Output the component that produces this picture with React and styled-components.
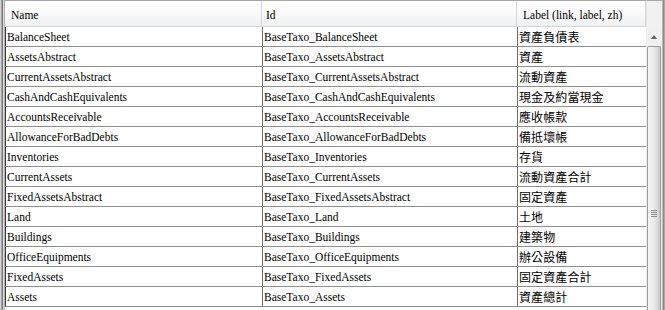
import styled, { createGlobalStyle } from "styled-components";

const Global = createGlobalStyle`
  html, body {
    margin: 0;
    padding: 0;
    background: #ffffff;
    overflow: hidden;
  }
`;

const rows = [
  ["BalanceSheet", "資產負債表"],
  ["AssetsAbstract", "資產"],
  ["CurrentAssetsAbstract", "流動資產"],
  ["CashAndCashEquivalents", "現金及約當現金"],
  ["AccountsReceivable", "應收帳款"],
  ["AllowanceForBadDebts", "備抵壞帳"],
  ["Inventories", "存貨"],
  ["CurrentAssets", "流動資產合計"],
  ["FixedAssetsAbstract", "固定資產"],
  ["Land", "土地"],
  ["Buildings", "建築物"],
  ["OfficeEquipments", "辦公設備"],
  ["FixedAssets", "固定資產合計"],
  ["Assets", "資產總計"],
];

const Frame = styled.div`
  display: flex;
  width: 665px;
  height: 310px;
  overflow: hidden;
  font-family: "Liberation Serif", "Noto Sans CJK TC", serif;
  font-size: 11.5px;
  color: #000;
`;

const EdgeLeft = styled.div`
  width: 5px;
  flex: none;
  background: linear-gradient(
    to right,
    #d4d4d4 0 1px,
    #a3a3a3 1px 2px,
    #7d7d7d 2px 3px,
    #d9d9d9 3px 4px,
    #b4b4b4 4px 5px
  );
`;

const EdgeRight = styled.div`
  width: 4px;
  flex: none;
  background: linear-gradient(
    to right,
    #b8b8b8 0 1px,
    #8a8a8a 1px 2px,
    #a8a8a8 2px 3px,
    #d0d0d0 3px 4px
  );
`;

const Table = styled.div`
  display: flex;
  flex-direction: column;
  width: 641px;
  flex: none;
`;

const Header = styled.div`
  display: grid;
  grid-template-columns: 257px 255px 129px;
  height: 25px;
  border-top: 1px solid #a7a7a7;
  border-bottom: 1px solid #d5d5d5;
  background: linear-gradient(to bottom, #ffffff 0%, #fafafb 45%, #eff0f2 100%);
`;

const HeadCell = styled.div`
  display: flex;
  align-items: center;
  padding-left: ${(p) => p.$pad}px;
  padding-top: 2px;
  border-right: 1px solid #d5d5d5;
  white-space: nowrap;
  overflow: hidden;
`;

const Row = styled.div`
  display: grid;
  grid-template-columns: 257px 255px 129px;
  height: 20px;
`;

const Cell = styled.div`
  display: flex;
  align-items: center;
  padding-left: ${(p) => p.$pad}px;
  padding-top: 1px;
  border-left: 1px solid ${(p) => (p.$first ? "#3a3a3a" : "#6e6e6e")};
  border-bottom: 1px solid #8f8f8f;
  white-space: nowrap;
  overflow: hidden;
`;

const Zh = styled.span`
  font-size: 12px;
  letter-spacing: 0.1px;
`;

const ScrollBar = styled.div`
  width: 16px;
  flex: none;
  display: flex;
  flex-direction: column;
  background: #f0f0f0;
`;

const Corner = styled.div`
  height: 26px;
  flex: none;
  border-top: 1px solid #a7a7a7;
  border-left: 1px solid #e6e6e6;
  background: #f1f1f1;
`;

const UpButton = styled.div`
  height: 19px;
  flex: none;
  display: flex;
  align-items: center;
  justify-content: center;
  background: #f0f0f0;
`;

const Arrow = styled.div`
  width: 0;
  height: 0;
  border-left: 3.5px solid transparent;
  border-right: 3.5px solid transparent;
  border-bottom: 4px solid #606060;
`;

const Thumb = styled.div`
  flex: 1;
  margin: 0 1px 0 1px;
  border: 1px solid #9a9a9a;
  border-bottom: none;
  border-radius: 2px 2px 0 0;
  background: linear-gradient(
    to right,
    #f4f4f4 0%,
    #eeeeee 40%,
    #dcdcdc 75%,
    #c8c8c8 100%
  );
  display: flex;
  justify-content: center;
  padding-top: 163px;
`;

const Grip = styled.div`
  width: 6px;
  height: 7px;
  background: repeating-linear-gradient(
    to bottom,
    #8e8e8e 0 1px,
    transparent 1px 2px
  );
`;

export default function App() {
  return (
    <>
      <Global />
      <Frame>
        <EdgeLeft />
        <Table>
          <Header>
            <HeadCell $pad={6}>Name</HeadCell>
            <HeadCell $pad={4}>Id</HeadCell>
            <HeadCell $pad={6}>Label (link, label, zh)</HeadCell>
          </Header>
          {rows.map(([name, zh]) => (
            <Row key={name}>
              <Cell $first $pad={1}>
                {name}
              </Cell>
              <Cell $pad={1}>BaseTaxo_{name}</Cell>
              <Cell $pad={1}>
                <Zh>{zh}</Zh>
              </Cell>
            </Row>
          ))}
        </Table>
        <ScrollBar>
          <Corner />
          <UpButton>
            <Arrow />
          </UpButton>
          <Thumb>
            <Grip />
          </Thumb>
        </ScrollBar>
        <EdgeRight />
      </Frame>
    </>
  );
}
